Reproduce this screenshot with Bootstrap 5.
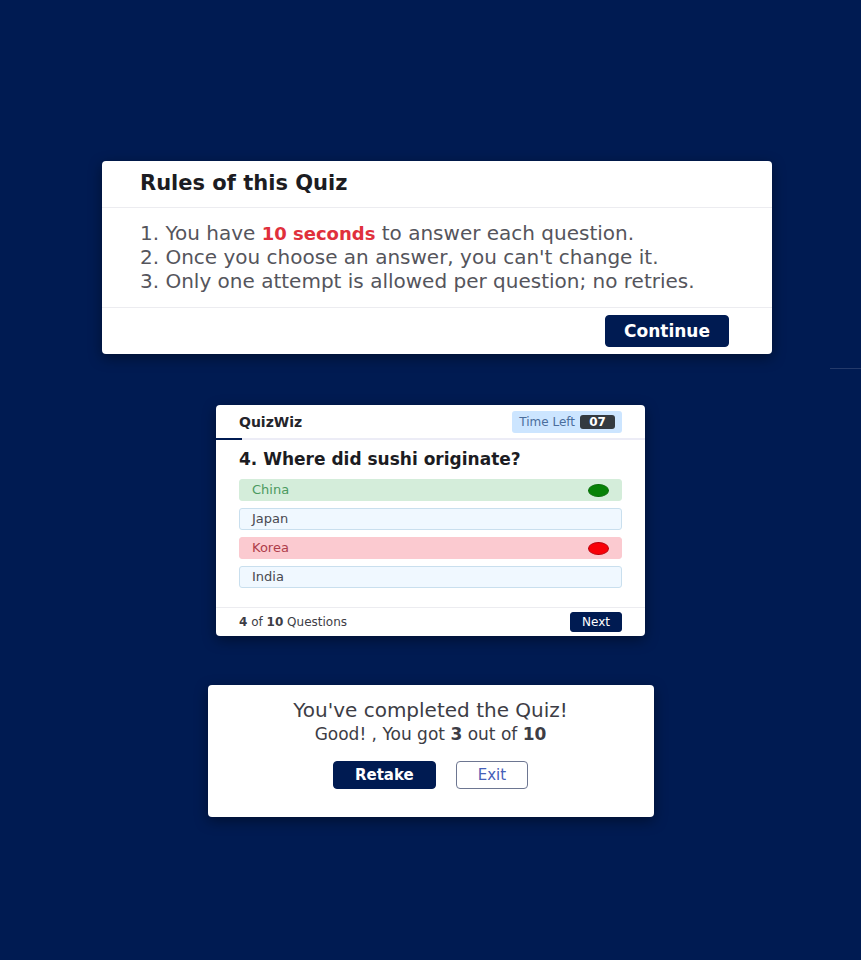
<!DOCTYPE html>
<html lang="en">
<head>
<meta charset="utf-8">
<meta name="viewport" content="width=device-width, initial-scale=1">
<title>QuizWiz</title>
<link href="https://cdn.jsdelivr.net/npm/bootstrap@5.3.0/dist/css/bootstrap.min.css" rel="stylesheet">
<style>
  :root { --navy: #001b52; }
  body { background: var(--navy); color: #3d3d45; font-family: "DejaVu Sans", sans-serif; }
  .screen { min-height: 100vh; padding-top: 161px; padding-bottom: 48px; }
  .panel { background: #fff; border-radius: 4px; width: 100%; box-shadow: 0 4px 14px rgba(0, 0, 0, .4); overflow: hidden; }
  .rule-line { border-color: #ececf0 !important; }
  .btn-navy { --bs-btn-color: #fff; --bs-btn-bg: var(--navy); --bs-btn-border-color: var(--navy); --bs-btn-hover-color: #fff; --bs-btn-hover-bg: #0a2c72; --bs-btn-hover-border-color: #0a2c72; }
  .btn { --bs-btn-border-radius: 4px; line-height: 16px; }

  .rules-wrap { padding-left: 13px; }
  .rules { max-width: 670px; }
  .rules-head { padding: 11px 38px 12px; }
  .rules-head h1 { font-size: 21px; line-height: 23px; font-weight: 700; color: #1c1c22; }
  .rules-body { padding: 13px 38px 14px; font-size: 20px; color: #55555c; }
  .rules-body div { line-height: 24px; height: 24px; }
  .hot { color: #e0303c; font-size: 18px; }
  .rules-foot { padding: 7px 43px 7px; }
  .btn-continue { font-size: 17px; font-weight: 700; padding: 7px 18px; }

  .divider { width: 31px; margin: 14px 0 36px; border-color: #8f99b3; }

  .quiz { max-width: 429px; }
  .quiz-head { padding: 6px 23px 5px; }
  .brand { font-size: 14px; font-weight: 700; line-height: 20px; color: #24242a; }
  .timer { background: #cce5ff; color: #4a6d9c; font-size: 12px; line-height: 14px; padding: 4px 7px; border-radius: 3px; gap: 5px; }
  .timer-count { background: #343a40; color: #fff; font-size: 12px; font-weight: 700; width: 35px; border-radius: 3px; text-align: center; }
  .time-track { height: 2px; border-radius: 0; background: #ececf6; }
  .time-track .progress-bar { background: var(--navy); }
  .quiz-body { padding: 8px 23px 19px; }
  .quiz-body h2 { font-size: 17px; font-weight: 700; line-height: 23px; color: #1c1c22; margin-bottom: 8px; }
  .answers { gap: 7px; }
  .answer { background: #f0f8ff; border: 1px solid #c9dfee; border-radius: 3px; padding: 0 12px; height: 22px; font-size: 13px; line-height: 20px; color: #48484f; text-align: left; }
  .answer.right { background: #d4edda; border-color: #d4edda; color: #4b9a5f; }
  .answer.wrong { background: #fbcad0; border-color: #fbcad0; color: #ae3d4a; }
  .dot { width: 21px; height: 13px; border-radius: 50%; background: #078207; border: 1px solid #0a6e0a; }
  .wrong .dot { background: #f80008; border-color: #b9000c; }
  .quiz-foot { padding: 4px 23px; font-size: 12px; line-height: 18px; }
  .btn-next { font-size: 12px; line-height: 14px; padding: 2px 11px; border-radius: 3px; }

  .result { max-width: 446px; margin-top: 49px; padding: 13px 16px 28px; }
  .result h2 { font-size: 20px; line-height: 24px; }
  .result p { font-size: 17px; line-height: 24px; margin-bottom: 15px; }
  .result .btn { font-size: 15px; line-height: 16px; padding: 5px 21px; }
  .result-actions { gap: 20px; }
  .btn-exit { --bs-btn-color: #4660b8; --bs-btn-border-color: #6d7691; --bs-btn-hover-color: #fff; --bs-btn-hover-bg: #4660b8; }
</style>
</head>
<body>
<main class="screen d-flex flex-column align-items-center">
  <div class="rules-wrap w-100 d-flex justify-content-center">
    <section class="panel rules">
      <header class="rules-head border-bottom rule-line"><h1 class="m-0">Rules of this Quiz</h1></header>
      <div class="rules-body">
        <div>1. You have <strong class="hot">10 seconds</strong> to answer each question.</div>
        <div>2. Once you choose an answer, you can't change it.</div>
        <div>3. Only one attempt is allowed per question; no retries.</div>
      </div>
      <footer class="rules-foot border-top rule-line d-flex justify-content-end">
        <button type="button" class="btn btn-navy btn-continue">Continue</button>
      </footer>
    </section>
  </div>

  <hr class="divider align-self-end">

  <section class="panel quiz">
    <header class="quiz-head d-flex justify-content-between align-items-center">
      <span class="brand">QuizWiz</span>
      <div class="timer d-flex align-items-center"><span>Time Left</span><span class="timer-count">07</span></div>
    </header>
    <div class="progress time-track" role="progressbar" aria-label="Time used" aria-valuenow="6" aria-valuemin="0" aria-valuemax="100">
      <div class="progress-bar" style="width: 6%"></div>
    </div>
    <div class="quiz-body">
      <h2>4. Where did sushi originate?</h2>
      <div class="answers d-flex flex-column">
        <button type="button" class="answer right d-flex justify-content-between align-items-center">China<span class="dot"></span></button>
        <button type="button" class="answer">Japan</button>
        <button type="button" class="answer wrong d-flex justify-content-between align-items-center">Korea<span class="dot"></span></button>
        <button type="button" class="answer">India</button>
      </div>
    </div>
    <footer class="quiz-foot border-top rule-line d-flex justify-content-between align-items-center">
      <span><strong>4</strong> of <strong>10</strong> Questions</span>
      <button type="button" class="btn btn-navy btn-next">Next</button>
    </footer>
  </section>

  <section class="panel result text-center">
    <h2 class="m-0">You've completed the Quiz!</h2>
    <p>Good! , You got <strong>3</strong> out of <strong>10</strong></p>
    <div class="result-actions d-flex justify-content-center">
      <button type="button" class="btn btn-navy fw-bold">Retake</button>
      <button type="button" class="btn btn-exit">Exit</button>
    </div>
  </section>
</main>
<script src="https://cdn.jsdelivr.net/npm/bootstrap@5.3.0/dist/js/bootstrap.bundle.min.js"></script>
</body>
</html>
